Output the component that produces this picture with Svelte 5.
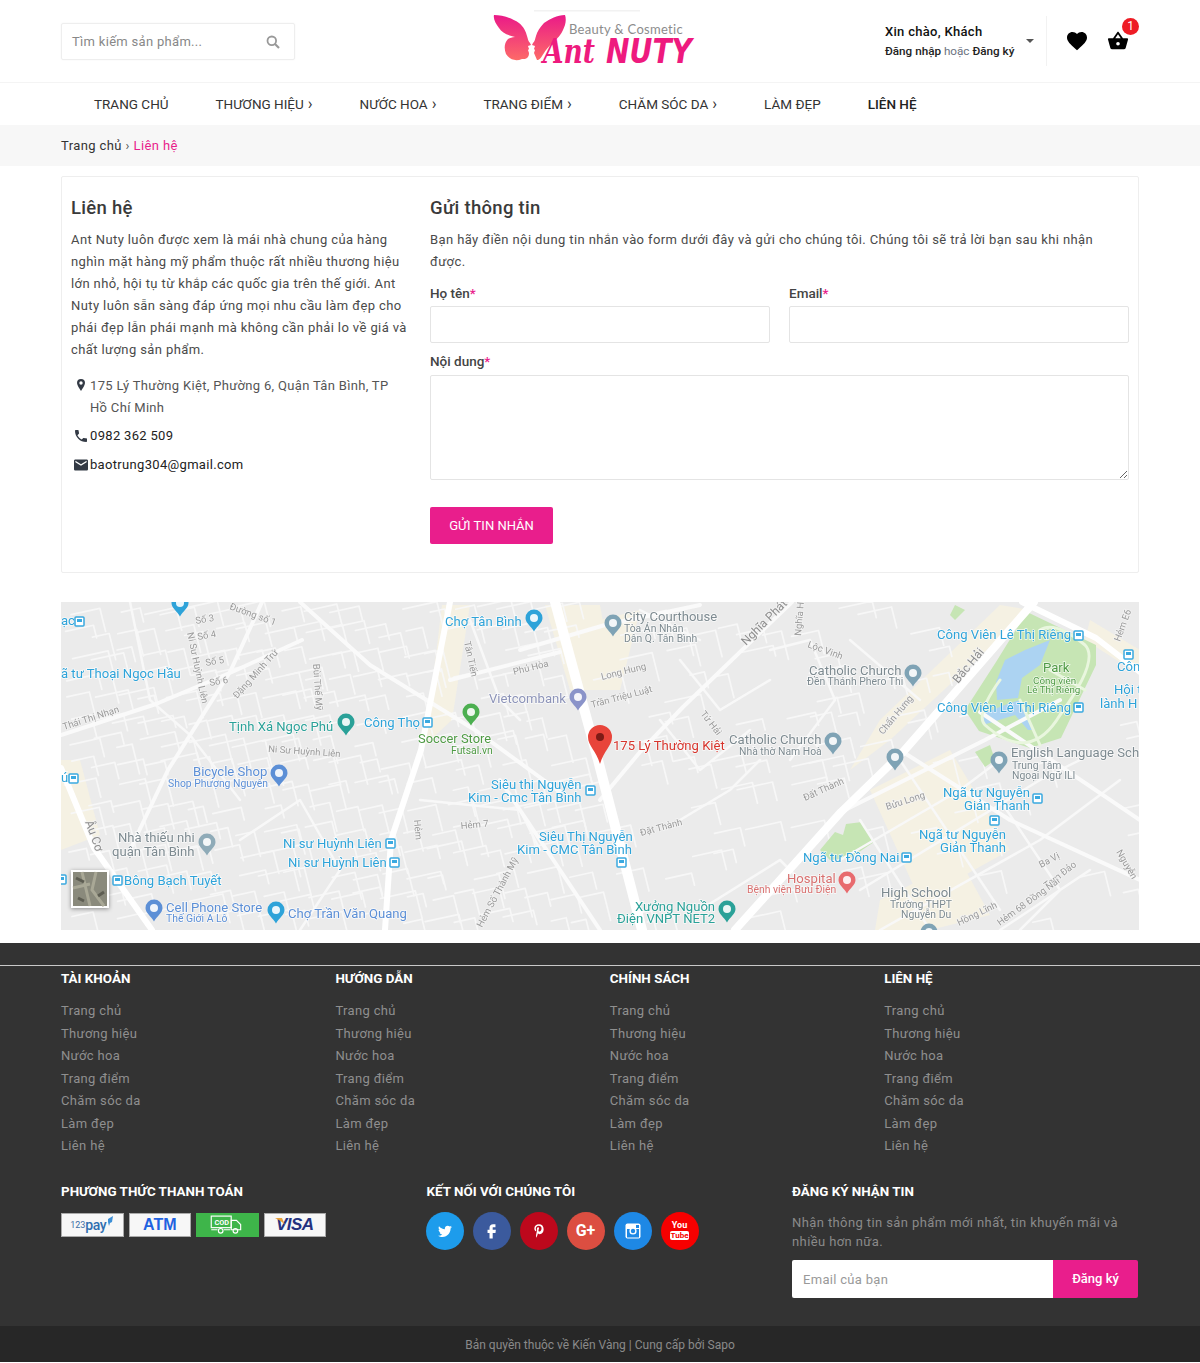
<script>
  const menu = [
    { t: 'TRANG CHỦ' }, { t: 'THƯƠNG HIỆU', more: true }, { t: 'NƯỚC HOA', more: true },
    { t: 'TRANG ĐIỂM', more: true }, { t: 'CHĂM SÓC DA', more: true }, { t: 'LÀM ĐẸP' },
    { t: 'LIÊN HỆ', active: true }
  ];
  const links = ['Trang chủ', 'Thương hiệu', 'Nước hoa', 'Trang điểm', 'Chăm sóc da', 'Làm đẹp', 'Liên hệ'];
  const columns = ['TÀI KHOẢN', 'HƯỚNG DẪN', 'CHÍNH SÁCH', 'LIÊN HỆ'];

  // map data, in page coordinates (the svg viewBox starts at 61,602)
  const BLUE = '#2ea3d9', TEAL = '#2aa198', GREY = '#7d8a90', VIOLET = '#5c8fd6', SLATE = '#8c93b8', GREEN = '#4f9a45';
  const L = 13.1, S = 10.4;
  const labels = [
    ['ạc', 61, 625, L, BLUE], ['ã tư Thoại Ngọc Hầu', 61, 678, L, BLUE], ['ú', 61, 782, L, BLUE],
    ['Công Thọ', 364, 727, L, BLUE], ['Tịnh Xá Ngọc Phú', 229, 731, L, TEAL], ['Chợ Tân Bình', 445, 626, L, BLUE],
    ['Vietcombank', 489, 703, L, SLATE], ['Soccer Store', 418, 743, 12.9, GREEN], ['Futsal.vn', 451, 754, S, GREEN],
    ['City Courthouse', 624, 621, L, GREY], ['Tòa Án Nhân', 624, 632, S, GREY], ['Dân Q. Tân Bình', 624, 642, S, GREY],
    ['Bicycle Shop', 193, 776, L, VIOLET], ['Shop Phượng Nguyên', 168, 787, S, VIOLET],
    ['Siêu thị Nguyễn', 491, 789, L, BLUE], ['Kim - Cmc Tân Bình', 468, 802, L, BLUE],
    ['Siêu Thị Nguyễn', 539, 841, L, BLUE], ['Kim - CMC Tân Bình', 517, 854, L, BLUE],
    ['Nhà thiếu nhi', 118, 842, L, GREY], ['quận Tân Bình', 112, 856, L, GREY],
    ['Ni sư Huỳnh Liên', 283, 848, L, BLUE], ['Ni sư Huỳnh Liên', 288, 867, L, BLUE], ['Bông Bạch Tuyết', 124, 885, L, BLUE],
    ['Cell Phone Store', 166, 912, L, VIOLET], ['Thế Giới A Lô', 166, 922, S, VIOLET], ['Chợ Trần Văn Quang', 288, 918, L, VIOLET],
    ['175 Lý Thường Kiệt', 613, 750, L, '#d6342c'], ['Catholic Church', 729, 744, L, GREY], ['Nhà thờ Nam Hoà', 739, 755, S, GREY],
    ['Catholic Church', 809, 675, L, GREY], ['Đền Thánh Phero Thi', 807, 685, S, GREY],
    ['Công Viên Lê Thị Riêng', 937, 639, L, BLUE], ['Công Viên Lê Thị Riêng', 937, 712, L, BLUE],
    ['Park', 1043, 672, L, GREEN], ['Công viên', 1033, 684, 9.8, GREEN], ['Lê Thị Riêng', 1027, 693, 9.8, GREEN],
    ['Côn', 1117, 671, L, BLUE], ['Hội t', 1114, 694, L, BLUE], ['lành H', 1100, 708, L, BLUE],
    ['English Language Sch', 1011, 757, L, GREY], ['Trung Tâm', 1012, 769, S, GREY], ['Ngoại Ngữ ILI', 1012, 779, S, GREY],
    ['Ngã tư Nguyễn', 943, 797, L, BLUE], ['Giản Thanh', 964, 810, L, BLUE], ['Ngã tư Nguyễn', 919, 839, L, BLUE], ['Giản Thanh', 940, 852, L, BLUE],
    ['Ngã tư Đồng Nai', 803, 862, L, BLUE], ['Hospital', 787, 883, L, '#d8706f'], ['Bệnh viện Bưu Điện', 747, 893, S, '#d8706f'],
    ['High School', 881, 897, L, GREY], ['Trường THPT', 890, 908, S, GREY], ['Nguyễn Du', 901, 918, S, GREY],
    ['Xưởng Nguồn', 635, 911, L, TEAL], ['Điện VNPT NET2', 617, 923, L, TEAL]
  ];
  const streets = [
    ['Số 3', 196, 624, -10], ['Số 4', 198, 640, -10], ['Số 5', 206, 666, -10], ['Số 6', 210, 686, -10],
    ['Ni Sư Huỳnh Liên', 187, 633, 78], ['Đặng Minh Trứ', 237, 699, -48], ['Bùi Thế Mỹ', 313, 664, 86],
    ['Thái Thị Nhạn', 64, 730, -18], ['Ni Sư Huỳnh Liên', 268, 752, 4], ['Hẻm 7', 461, 829, -5], ['Hẻm', 414, 820, 85],
    ['Hẻm Số Thành Mỹ', 482, 928, -62], ['Tân Tiến', 464, 642, 78], ['Phú Hòa', 514, 675, -14], ['Long Hung', 602, 680, -14],
    ['Trần Triệu Luật', 592, 708, -15], ['Đặt Thành', 641, 836, -15], ['Nghĩa H', 801, 636, -85], ['Lộc Vinh', 807, 647, 20],
    ['Tứ Hải', 700, 714, 52], ['Chấn Hưng', 883, 735, -50], ['Đất Thành', 805, 801, -24], ['Bửu Long', 887, 810, -18],
    ['Ba Vị', 1041, 868, -28], ['Tam Đảo', 1047, 889, -38], ['Hồng Lĩnh', 959, 926, -26], ['Hẻm 68 Đồng Nai', 1000, 926, -36],
    ['Nguyễn', 1116, 852, 60], ['Hẻm E6', 1120, 642, -70], ['Đường số 1', 229, 609, 20]
  ];
  const pins = [
    [346, 722, TEAL], [534, 618, BLUE], [578, 697, '#8a93c9'], [471, 712, '#4caf50'], [613, 623, '#7fa3b5'], [279, 773, VIOLET],
    [207, 842, '#8fabb8'], [154, 908, VIOLET], [276, 910, BLUE], [833, 741, '#7fa3b5'], [913, 673, '#7fa3b5'], [999, 760, '#7fa3b5'],
    [895, 757, '#7fa3b5'], [847, 880, '#e86b6e'], [727, 909, TEAL], [180, 603, BLUE], [929, 932, '#7fa3b5']
  ];
  const stops = [
    [79, 621], [427, 722], [73, 778], [590, 790], [621, 862], [390, 843], [394, 862], [117, 880], [61, 879],
    [1078, 635], [1078, 707], [1128, 654], [1037, 798], [994, 820], [906, 857]
  ];
  const wide = [
    ['M555 602L598 760L642 930', 10], ['M1034 602L903 752L841 812L735 930', 8], ['M61 768L94 848L152 930', 6],
    ['M450 602L421 750L391 840L385 930', 6], ['M1022 602L1096 638L1140 672', 6]
  ];
  const mid = [
    'M300 602L370 665L475 730L560 792', 'M61 735L156 704L232 672L302 640', 'M792 602L683 707L640 752L600 800',
    'M903 752L1010 820L1140 880', 'M980 712L1140 820', 'M841 812L985 740L1060 700', 'M230 672L262 602', 'M230 672L168 770L130 850',
    'M520 650L605 625L700 605', 'M450 680L560 652', 'M600 930L500 780'
  ];
  const alleys = [
    'M130 602L150 700L190 735L240 800', 'M240 840L300 800L340 870L300 930', 'M420 800L520 810L540 850', 'M470 620L500 700L520 720',
    'M680 660L720 710L770 680', 'M770 650L810 640L835 700L790 760', 'M840 860L960 790L1000 760', 'M860 890L1040 780L1080 760',
    'M880 930L1040 840L1120 780', 'M860 820L930 930', 'M900 760L1000 910', 'M1000 800L1060 890L1020 930', 'M1000 930L1090 870',
    'M700 910L780 860L800 880', 'M680 820L730 790L760 760', 'M660 720L700 770L750 730', 'M640 610L700 640', 'M850 640L920 700'
  ];

  // fine lane network: hand-placing hundreds of lanes is pointless, a fixed seed keeps it stable
  let seed = 4711;
  const rnd = () => (seed = (seed * 16807) % 2147483647) / 2147483647;
  const lanes = [];
  for (let x = 64; x < 1136; x += 24) {
    for (let y = 606; y < 926; y += 22) {
      const dense = x < 560 ? 0.85 : x < 700 ? 0.4 : 0.3;
      const inPark = x > 960 && x < 1098 && y < 750;
      if (inPark || rnd() > dense) continue;
      const a = 14 + rnd() * 22, b = 10 + rnd() * 20;
      lanes.push(`M${x + rnd() * 10} ${y + rnd() * 10}l${a} ${-a * 0.22}l${b * 0.25} ${b}`);
    }
  }
</script>

{#snippet pin(x, y, color)}
  <g transform="translate({x} {y})">
    <path fill={color} d="M0-8.5a8.5 8.5 0 0 1 8.5 8.5c0 5-5.5 8-8.5 13.5c-3-5.5-8.5-8.5-8.5-13.5a8.5 8.5 0 0 1 8.5-8.5z"/>
    <circle r="4" fill="#fff" opacity=".9"/>
  </g>
{/snippet}

<header class="top">
  <div class="wrap top-in">
    <div class="search">
      <span>Tìm kiếm sản phẩm...</span>
      <svg width="14" height="14" viewBox="0 0 14 14"><circle cx="5.8" cy="5.8" r="4.3" fill="none" stroke="#999" stroke-width="1.8"/><path d="M9 9l4 4" stroke="#999" stroke-width="2.2"/></svg>
    </div>

    <svg class="logo" width="204" height="82" viewBox="0 0 204 82">
      <defs>
        <linearGradient id="wing" x1="0" y1="0" x2="0" y2="1"><stop offset="0" stop-color="#ea1a88"/><stop offset="1" stop-color="#fd6a68"/></linearGradient>
      </defs>
      <rect x="41" y="10" width="106" height="1.5" fill="#f2f2f2"/>
      <path fill="url(#wing)" d="M1 15c8 0 18 3 25 8c5 4 7 9 8 13c1 3 1 5 3 7l1 2l-3 1l1 3l-1 1l1 3c0 3-1 4-2 5c-1 1-3 1-5 1c-7 3-13 0-16-5c-2-5-2-11 2-15c2-1 4-2 7-2c-8-2-13-4-16-9c-3-4-6-9-5-13z"/>
      <path fill="url(#wing)" d="M72 15c-8 0-15 4-21 8c-4 4-7 9-8 13c-1 3-1 5-3 7l-1 2l3 1l-1 3l1 1l-1 3l3 7c3 1 6-6 9-10c3-4 6-7 9-10c6-4 8-10 10-15c1-4 1-7 0-10z"/>
      <text class="lg-tag" x="76" y="34">Beauty &amp; Cosmetic</text>
      <text class="lg-ant" x="50" y="63" textLength="52" lengthAdjust="spacingAndGlyphs">Ant</text>
      <text class="lg-nuty" x="113" y="63" textLength="86" lengthAdjust="spacingAndGlyphs">NUTY</text>
    </svg>

    <div class="acct">
      <div class="hello"><strong>Xin chào, Khách</strong><small><b>Đăng nhập</b> hoặc <b>Đăng ký</b></small></div>
      <i class="caret"></i>
      <div class="icons">
        <svg width="24" height="24" viewBox="0 0 24 24"><path d="M12 21.35l-1.45-1.32C5.4 15.36 2 12.28 2 8.5 2 5.42 4.42 3 7.5 3c1.74 0 3.41.81 4.5 2.09C13.09 3.81 14.76 3 16.5 3 19.58 3 22 5.42 22 8.5c0 3.78-3.4 6.86-8.55 11.54L12 21.35z"/></svg>
        <div class="cart">
          <svg width="22" height="22" viewBox="0 0 24 24"><path d="M5.5 21C4.72 21 4.04 20.55 3.71 19.89L1.1 10.44L1 10A1 1 0 0 1 2 9H6.58L11.18 2.43C11.36 2.17 11.66 2 12 2C12.34 2 12.65 2.17 12.83 2.44L17.42 9H22A1 1 0 0 1 23 10L22.96 10.29L20.29 19.89C19.96 20.55 19.28 21 18.5 21H5.5M12 4.74L9 9H15L12 4.74M12 13A2 2 0 0 0 10 15A2 2 0 0 0 12 17A2 2 0 0 0 14 15A2 2 0 0 0 12 13Z"/></svg>
          <span class="badge">1</span>
        </div>
      </div>
    </div>
  </div>
</header>

<nav class="wrap menu">
  {#each menu as m}
    <a class:active={m.active}>{m.t}{#if m.more}<em>›</em>{/if}</a>
  {/each}
</nav>

<div class="crumbs"><div class="wrap">Trang chủ <span class="sep">›</span> <span class="here">Liên hệ</span></div></div>

<main class="wrap">
  <section class="card">
    <div class="about">
      <h2>Liên hệ</h2>
      <p>Ant Nuty luôn được xem là mái nhà chung của hàng nghìn mặt hàng mỹ phẩm thuộc rất nhiều thương hiệu lớn nhỏ, hội tụ từ khắp các quốc gia trên thế giới. Ant Nuty luôn sẵn sàng đáp ứng mọi nhu cầu làm đẹp cho phái đẹp lẫn phái mạnh mà không cần phải lo về giá và chất lượng sản phẩm.</p>
      <ul class="info">
        <li class="addr">
          <svg width="14" height="12" viewBox="0 0 8 12"><path fill="#333a45" fill-rule="evenodd" d="M4 0a4 4 0 0 1 4 4c0 2.2-2.5 5.5-4 8c-1.5-2.5-4-5.8-4-8a4 4 0 0 1 4-4zm0 2.3a1.7 1.7 0 1 0 0 3.4a1.7 1.7 0 0 0 0-3.4z"/></svg>
          <span>175 Lý Thường Kiệt, Phường 6, Quận Tân Bình, TP Hồ Chí Minh</span>
        </li>
        <li>
          <svg width="14" height="12" viewBox="3 3 18 18"><path fill="#333a45" d="M6.62 10.79c1.44 2.83 3.76 5.14 6.59 6.59l2.2-2.2c.27-.27.67-.36 1.02-.24 1.12.37 2.33.57 3.57.57.55 0 1 .45 1 1V20c0 .55-.45 1-1 1-9.39 0-17-7.61-17-17 0-.55.45-1 1-1h3.5c.55 0 1 .45 1 1 0 1.25.2 2.45.57 3.57.11.35.03.74-.25 1.02l-2.2 2.2z"/></svg>
          <span class="dark">0982 362 509</span>
        </li>
        <li>
          <svg width="14" height="12" viewBox="2 4 20 16"><path fill="#333a45" d="M20 4H4c-1.1 0-1.99.9-1.99 2L2 18c0 1.1.9 2 2 2h16c1.1 0 2-.9 2-2V6c0-1.1-.9-2-2-2zm0 4l-8 5-8-5V6l8 5 8-5v2z"/></svg>
          <span class="dark">baotrung304@gmail.com</span>
        </li>
      </ul>
    </div>

    <form class="send">
      <h2>Gửi thông tin</h2>
      <p>Bạn hãy điền nội dung tin nhắn vào form dưới đây và gửi cho chúng tôi. Chúng tôi sẽ trả lời bạn sau khi nhận được.</p>
      <div class="two">
        <label>Họ tên<b>*</b><input type="text" /></label>
        <label>Email<b>*</b><input type="text" /></label>
      </div>
      <label class="msg">Nội dung<b>*</b><textarea></textarea></label>
      <button type="button" class="submit">GỬI TIN NHẮN</button>
    </form>
  </section>

  <div class="map">
    <svg width="1078" height="328" viewBox="61 602 1078 328">
      <rect x="61" y="602" width="1078" height="328" fill="#ebebeb"/>
      <g fill="#f5f1e3">
        <path d="M61 760L80 760L100 835L61 850Z"/><path d="M442 605L470 605L452 720L425 745Z"/><path d="M545 605L600 605L615 690L570 690Z"/>
        <path d="M600 620L640 610L620 690L610 690Z"/><path d="M890 740L1030 610L1000 605L880 720L850 770Z"/>
        <path d="M870 790L950 750L1010 850L920 900Z"/><path d="M880 900L960 860L990 915L930 930L875 930Z"/><path d="M1090 620L1140 650L1140 675L1085 640Z"/>
      </g>
      <g fill="none" stroke="#f7f7f7" stroke-linejoin="round" stroke-linecap="round">
        {#each lanes as d}<path {d} stroke-width="1.7"/>{/each}
      </g>
      <g fill="#c6e5b4">
        <path d="M1027 612L1096 645L1096 665L1061 738L1030 748L979 731L965 710L996 662Z"/>
        <path d="M820 850L835 832L843 835L846 824L862 822L874 842L850 858L830 860Z"/>
        <path d="M975 752L990 745L995 760L985 767Z"/><path d="M955 605L965 610L955 620L950 615Z"/>
      </g>
      <path fill="#acd3f2" d="M1050 640L1040 665L1022 678L1018 698L997 700L996 682L1005 660L1025 650ZM982 714L1010 703L1020 700L1033 730L1028 730L1015 715L983 725Z"/>
      <g fill="none" stroke="#f8f8f8" stroke-linejoin="round" stroke-linecap="round">
        {#each alleys as d}<path {d} stroke-width="2.5"/>{/each}
        {#each mid as d}<path {d} stroke="#fafafa" stroke-width="4"/>{/each}
        <path d="M1000 680Q975 715 985 725Q1030 765 1060 715Q1100 660 1085 645Q1055 620 1040 630M1020 700L1040 745M1050 670L1085 690" stroke="#e9f6de" stroke-width="3"/>
        {#each wide as [d, w]}<path {d} stroke="#fff" stroke-width={w}/>{/each}
      </g>
      {#each streets as [t, x, y, r]}
        <text class="st" {x} {y} transform="rotate({r} {x} {y})">{t}</text>
      {/each}
      <text class="st big" x="85" y="822" transform="rotate(70 85 822)">Âu Cơ</text>
      <text class="st big" x="746" y="646" transform="rotate(-45 746 646)">Nghĩa Phát</text>
      <text class="st big" x="958" y="684" transform="rotate(-50 958 684)">Bắc Hải</text>
      {#each labels as [t, x, y, s, c]}
        <text class="lb" {x} {y} font-size={s} fill={c}>{t}</text>
      {/each}
      {#each stops as [x, y]}
        <rect x={x - 4} y={y - 4} width="9" height="9" rx="1" fill="#fff" stroke="#3aa9e0" stroke-width="1.5"/>
        <rect x={x - 2} y={y - 2} width="5" height="3" fill="#3aa9e0"/>
      {/each}
      {#each pins as [x, y, c]}{@render pin(x, y, c)}{/each}
      <path fill="#e8443a" d="M600 725a12 12 0 0 1 12 12c0 9-8 13-12 27c-4-14-12-18-12-27a12 12 0 0 1 12-12z"/>
      <circle cx="600" cy="737" r="4" fill="#7c1b16"/>
      <rect x="71" y="870" width="38" height="38" fill="#fff" filter="drop-shadow(0 1px 2px rgba(0,0,0,.4))"/>
      <rect x="73" y="872" width="34" height="34" fill="#8a8a7c"/>
      <path d="M82 872L90 906M96 872L92 890L104 906M73 888L90 884" stroke="#a9a896" stroke-width="3" fill="none"/>
      <path d="M76 878l8 4M98 896l6-4M78 898l6 3" stroke="#5d5d52" stroke-width="3" fill="none"/>
    </svg>
  </div>
</main>

<footer>
  <div class="rule"></div>
  <div class="wrap">
    <div class="cols">
      {#each columns as c}
        <div>
          <h4>{c}</h4>
          <ul>{#each links as l}<li>{l}</li>{/each}</ul>
        </div>
      {/each}
    </div>
    <div class="lower">
      <div>
        <h4>PHƯƠNG THỨC THANH TOÁN</h4>
        <div class="pay">
          <span class="pc p123">123<b>pay</b><svg width="7" height="11" viewBox="0 0 7 11"><path fill="#3d8fd6" d="M1 3l5-3-1 6-2 1-1 3-1-4z"/></svg></span>
          <span class="pc atm">ATM</span>
          <span class="pc cod">
            <svg width="34" height="21" viewBox="0 0 32 20" fill="none" stroke="#fff" stroke-width="1.1">
              <rect x="1" y="2" width="19" height="11"/><path d="M20 6h5l4 4v5H20zM1 15h6M13 15h6"/><circle cx="10" cy="16" r="2.2"/><circle cx="24" cy="16" r="2.2"/>
              <text x="4" y="10.5" fill="#fff" stroke="none" font-size="7" font-weight="700">COD</text>
            </svg>
          </span>
          <span class="pc visa"><svg class="swoosh" width="10" height="7" viewBox="0 0 10 7"><path fill="#e8a33b" d="M0 0h7l3 7C8 4 4 2 0 0z"/></svg>VISA</span>
        </div>
      </div>
      <div>
        <h4>KẾT NỐI VỚI CHÚNG TÔI</h4>
        <div class="social">
          <span style="background:#1d9cec"><svg width="16" height="16" viewBox="0 0 24 24"><path d="M22.46 6c-.77.35-1.6.58-2.46.69.88-.53 1.56-1.37 1.88-2.38-.83.5-1.75.85-2.72 1.05C18.37 4.5 17.26 4 16 4c-2.35 0-4.27 1.92-4.27 4.29 0 .34.04.67.11.98C8.28 9.09 5.11 7.38 3 4.79c-.37.63-.58 1.37-.58 2.15 0 1.49.75 2.81 1.91 3.56-.71 0-1.37-.2-1.95-.5v.03c0 2.08 1.48 3.82 3.44 4.21a4.22 4.22 0 0 1-1.93.07 4.28 4.28 0 0 0 4 2.98 8.521 8.521 0 0 1-5.33 1.84c-.34 0-.68-.02-1.02-.06C3.44 20.29 5.7 21 8.12 21 16 21 20.33 14.46 20.33 8.79c0-.19 0-.37-.01-.56.84-.6 1.56-1.36 2.14-2.23z"/></svg></span>
          <span style="background:#3b5a9d"><svg width="19" height="19" viewBox="0 0 24 24"><path d="M14 8h3V4h-3c-2.8 0-4.5 1.8-4.5 4.5V11H7v4h2.5v7h4v-7H17l.5-4h-4V8.6c0-.4.2-.6.5-.6z"/></svg></span>
          <span style="background:#bd081c"><svg width="16" height="16" viewBox="0 0 24 24"><path d="M12 2C7.8 2 5 4.8 5 8.2c0 2 1 3.7 2.4 4.2l.7-2c-.6-.7-.9-1.3-.9-2.2 0-2.4 1.9-4.1 4.5-4.1 2.5 0 4.1 1.5 4.1 3.7 0 2.8-1.3 5-3.1 5-1 0-1.8-.8-1.5-1.9.3-1.2.9-2.4.9-3.3 0-.8-.4-1.4-1.3-1.4-1 0-1.9 1-1.9 2.4 0 .9.3 1.5.3 1.5L7.6 18c-.3 1.4-.1 3 0 4 1.1-1.1 1.8-2.7 2.1-3.9l.7-2.7c.5.8 1.5 1.4 2.7 1.4 3.5 0 5.9-3.1 5.9-7.3C19 4.8 16.2 2 12 2z"/></svg></span>
          <span class="gp" style="background:#dc4e41">G+</span>
          <span style="background:#1e88e5"><svg width="16" height="16" viewBox="0 0 16 16"><rect x=".5" y=".5" width="15" height="15" rx="2" fill="#fff"/><rect x="2" y="6" width="12" height="8.5" fill="#1e88e5"/><circle cx="8" cy="8" r="3.6" fill="#fff"/><circle cx="8" cy="8" r="2.2" fill="#1e88e5"/><rect x="11" y="2" width="3" height="3" fill="#1e88e5"/></svg></span>
          <span class="yt" style="background:#f70000"><small>You</small><small class="tube">Tube</small></span>
        </div>
      </div>
      <div>
        <h4>ĐĂNG KÝ NHẬN TIN</h4>
        <p class="news">Nhận thông tin sản phẩm mới nhất, tin khuyến mãi và nhiều hơn nữa.</p>
        <div class="sub"><span>Email của bạn</span><button type="button">Đăng ký</button></div>
      </div>
    </div>
  </div>
  <div class="copy">Bản quyền thuộc về Kiến Vàng | Cung cấp bởi Sapo</div>
</footer>

<style>
  :global(body) { margin: 0; background: #fff; font-family: Roboto, "Liberation Sans", sans-serif; color: #333; font-size: 13px; }
  .wrap { width: 1078px; margin: 0 auto; }

  /* header */
  .top { height: 82px; border-bottom: 1px solid #f4f4f4; box-sizing: content-box; }
  .top-in { display: flex; align-items: center; height: 82px; }
  .search {
    width: 234px; height: 37px; box-sizing: border-box; padding: 1px 14px 0 10px;
    display: flex; align-items: center; justify-content: space-between;
    border: 1px solid #eee; border-radius: 2px; box-shadow: 0 0 2px rgba(0,0,0,.05);
    color: #888; letter-spacing: .3px;
  }
  .logo { margin-left: 198px; flex: none; }
  .lg-tag { font: 13px Lato, sans-serif; fill: #8c8c8c; letter-spacing: .3px; }
  .lg-ant { font: italic 700 34px "DejaVu Serif", serif; fill: #ee1a7e; }
  .lg-nuty { font: italic 700 33px "DejaVu Sans", sans-serif; fill: #ee1a7e; }
  .acct { margin-left: auto; display: flex; align-items: center; }
  .hello { display: flex; flex-direction: column; gap: 5px; width: 141px; color: #111; margin-top: -1px; }
  .hello strong { font-weight: 500; font-size: 13px; letter-spacing: .3px; }
  .hello small { font-size: 11.7px; color: #6b7280; }
  .hello b { font-weight: 500; color: #222; }
  .caret { width: 0; height: 0; border: 4px solid transparent; border-top: 4px solid #555; margin: 4px 0 0 0; }
  .icons { margin-left: 12px; height: 50px; border-left: 1px solid #f2f2f2; display: flex; align-items: center; gap: 18px; padding: 0 10px 0 18px; }
  .cart { position: relative; height: 22px; }
  .badge {
    position: absolute; top: -12px; left: 15px; width: 17px; height: 17px; border-radius: 50%;
    background: #ee1c25; color: #fff; font-size: 12px; line-height: 17px; text-align: center;
  }

  /* menu */
  .menu { height: 42px; display: flex; align-items: center; gap: 47px; padding-left: 33px; box-sizing: border-box; }
  .menu a { color: #333; font-size: 13.5px; white-space: nowrap; }
  .menu a em { font-style: normal; margin-left: 4px; font-size: 16px; line-height: 1; }
  .menu a.active { font-weight: 500; color: #222; }
  .crumbs { background: #f7f7f7; height: 41px; line-height: 41px; color: #333; letter-spacing: .4px; }
  .sep { color: #555; }
  .here { color: #e91e8c; }

  /* contact card */
  .card {
    margin-top: 10px; height: 397px; box-sizing: border-box; border: 1px solid #eee; border-radius: 2px;
    display: grid; grid-template-columns: 338px 699px; column-gap: 21px; padding: 0 9px;
  }
  h2 { font-size: 18.5px; letter-spacing: .3px; font-weight: 500; margin: 19px 0 9px; line-height: 24px; color: #3a3a3a; }
  .card p { margin: 0; line-height: 22px; color: #4a4a4a; letter-spacing: .4px; }
  .info { list-style: none; padding: 0; margin: 10px 0 0; }
  .info li { display: flex; padding-left: 3px; line-height: 22px; margin-bottom: 7px; color: #555; letter-spacing: .32px; }
  .info li span { flex: 1; padding-right: 13px; }
  .info li svg { flex: none; margin: 5px 2px 0 0; }
  .info .addr { line-height: 29px; margin-bottom: 0; }
  .info .addr svg { margin-top: 8px; }
  .info .addr span { line-height: 22px; padding-top: 4px; padding-bottom: 6px; }
  .dark { color: #222; }

  .two { display: grid; grid-template-columns: 340px 340px; column-gap: 19px; margin-top: 12px; }
  label { display: block; font-weight: 500; font-size: 13.5px; color: #444; line-height: 16px; }
  label b { color: #e91e8c; font-weight: 500; }
  input, textarea {
    display: block; width: 100%; box-sizing: border-box; margin-top: 5px;
    border: 1px solid #e4e4e4; border-radius: 2px; background: #fff; height: 37px; outline: none;
  }
  .msg { margin-top: 10px; }
  textarea { height: 105px; resize: vertical; margin-top: 6px; }
  .submit {
    margin-top: 27px; width: 123px; height: 37px; border: 0; border-radius: 2px;
    background: #e91e8c; color: #fff; font: 13px Roboto, sans-serif; cursor: pointer;
  }

  .map { margin-top: 29px; height: 328px; }
  .map svg { display: block; filter: blur(.35px); }
  .st { font: 9.5px Roboto, sans-serif; fill: #9a9a9a; paint-order: stroke; stroke: #f4f4f4; stroke-width: 1.5px; }
  .st.big { font-size: 12px; fill: #8d8d8d; }
  .lb { font-family: Roboto, sans-serif; paint-order: stroke; stroke: rgba(255,255,255,.75); stroke-width: 1.5px; }

  /* footer */
  footer { margin-top: 13px; background: #333; height: 419px; box-sizing: border-box; padding-top: 22px; color: #8f8f8f; position: relative; }
  .rule { height: 1px; background: #c9c9c9; }
  h4 { margin: 0; color: #fff; font-size: 13.4px; font-weight: 700; line-height: 18px; }
  .cols { display: grid; grid-template-columns: repeat(4, 274.4px); width: 1098px; padding-top: 4px; }
  .cols ul { list-style: none; margin: 12px 0 0; padding: 0; }
  .cols li { line-height: 22.5px; letter-spacing: .35px; }
  .lower { display: grid; grid-template-columns: 365.5px 365.5px 347px; margin-top: 25px; }
  .pay { display: flex; gap: 5px; margin-top: 12px; }
  .pc {
    width: 62.5px; height: 24px; box-sizing: border-box; border: 1px solid #aaa; background: #f7f7f7;
    display: flex; align-items: center; justify-content: center; position: relative;
  }
  .p123 { font-size: 9px; color: #3a6ea5; }
  .p123 b { font-size: 14px; font-weight: 500; color: #2f6fb0; letter-spacing: -.4px; }
  .p123 svg { margin: -6px 0 0 1px; }
  .atm { color: #1f62e0; font: 700 16px "Liberation Sans", sans-serif; }
  .cod { background: #3eb54a; border-color: #3eb54a; }
  .visa { color: #23317f; font: italic 700 17px "Liberation Sans", sans-serif; letter-spacing: -.5px; }
  .swoosh { position: absolute; left: 10px; top: 4px; }
  .social { display: flex; gap: 9px; margin-top: 11px; margin-left: -1px; }
  .social span { width: 38px; height: 38px; border-radius: 50%; display: flex; flex-direction: column; align-items: center; justify-content: center; }
  .social svg { fill: #fff; }
  .gp { color: #fff; font-weight: 700; font-size: 16px; }
  .yt small { color: #fff; font-size: 9px; font-weight: 700; line-height: 9px; }
  .yt .tube { background: #fff; color: #f70000; border-radius: 2px; padding: 0 1px; font-size: 8px; line-height: 9px; margin-top: 1px; }
  .news { margin: 12px 0 0; line-height: 19.5px; letter-spacing: .4px; color: #8a8a8a; width: 340px; }
  .sub { display: flex; width: 346px; height: 38px; margin-top: 8px; }
  .sub span { flex: 1; background: #fff; border-radius: 2px 0 0 2px; color: #999; line-height: 39px; padding-left: 11px; letter-spacing: .3px; }
  .sub button { width: 85px; border: 0; background: #e91e8c; color: #fff; font: 500 13px Roboto, sans-serif; border-radius: 0 2px 2px 0; }
  .copy {
    position: absolute; left: 0; right: 0; top: 383px; height: 36px; background: #272727;
    text-align: center; line-height: 38px; font-size: 12px; color: #8a8a8a;
  }
</style>
